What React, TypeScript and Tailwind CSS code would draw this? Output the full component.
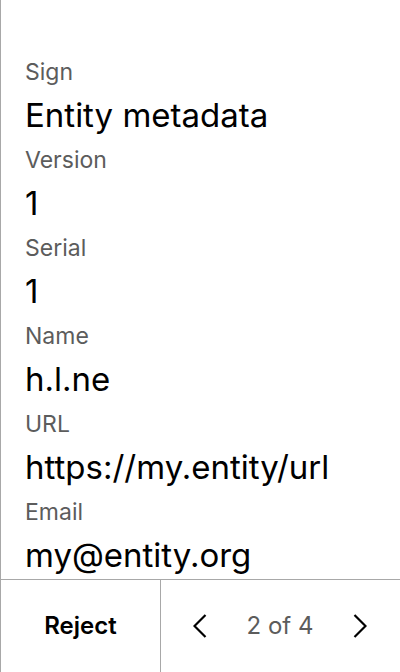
import React from "react";

const items = [
  { label: "Sign", value: "Entity metadata" },
  { label: "Version", value: "1" },
  { label: "Serial", value: "1" },
  { label: "Name", value: "h.l.ne" },
  { label: "URL", value: "https://my.entity/url" },
  { label: "Email", value: "my@entity.org" },
];

export default function App() {
  return (
    <div
      className="w-[400px] h-[672px] bg-white flex flex-col border-l border-[#a8a8a8] overflow-hidden"
      style={{ fontFamily: "Inter, 'Noto Sans', sans-serif" }}
    >
      <div className="flex-1 min-h-0 flex flex-col gap-[13px] pt-[58px] pl-6">
        {items.map((it) => (
          <div key={it.label} className="flex flex-col">
            <div className="text-[23px] leading-[28px] text-[#5c5c5c] whitespace-nowrap">{it.label}</div>
            <div className="text-[33px] leading-[36px] text-black mt-[11px] whitespace-nowrap">{it.value}</div>
          </div>
        ))}
      </div>
      <div className="h-[93px] shrink-0 border-t border-[#a8a8a8] flex">
        <div className="w-[160px] border-r border-[#a8a8a8] flex items-center justify-center">
          <span className="text-[24px] font-semibold text-black">Reject</span>
        </div>
        <div className="flex-1 flex items-center justify-between pl-8 pr-[33px]">
          <svg width="14" height="24" viewBox="0 0 14 24" fill="none">
            <polyline points="12.5,1 1.5,12 12.5,23" stroke="black" strokeWidth="2.2" />
          </svg>
          <span className="text-[24px] text-[#5c5c5c]">2 of 4</span>
          <svg width="14" height="24" viewBox="0 0 14 24" fill="none">
            <polyline points="1.5,1 12.5,12 1.5,23" stroke="black" strokeWidth="2.2" />
          </svg>
        </div>
      </div>
    </div>
  );
}
